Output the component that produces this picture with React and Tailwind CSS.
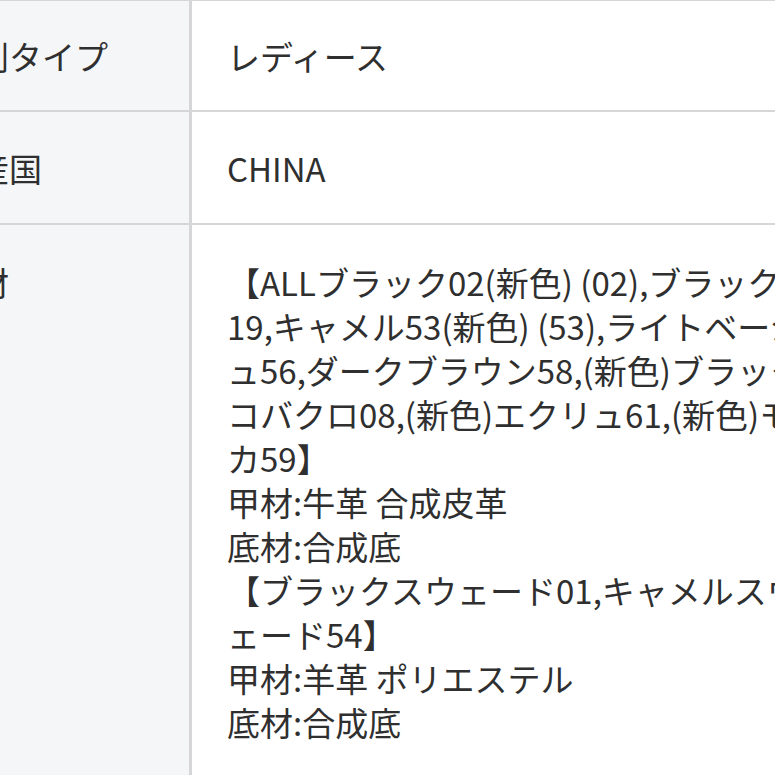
export default function App() {
  const font = { fontFamily: '"Noto Sans CJK JP", "Noto Sans", sans-serif' };
  const rows = [
    { label: '性別タイプ', value: ['レディース'], pad: 'pt-[33px] pb-[32px]' },
    { label: '生産国', value: ['CHINA'], pad: 'pt-[34px] pb-[33px]' },
    {
      label: '素材',
      pad: 'pt-[35px] pb-[32px]',
      value: [
        '【ALLブラック02(新色) (02),ブラックヌバック',
        '19,キャメル53(新色) (53),ライトベージュ',
        'ュ56,ダークブラウン58,(新色)ブラックレ',
        'コバクロ08,(新色)エクリュ61,(新色)モ',
        'カ59】',
        '甲材:牛革 合成皮革',
        '底材:合成底',
        '【ブラックスウェード01,キャメルスウ',
        'ェード54】',
        '甲材:羊革 ポリエステル',
        '底材:合成底',
      ],
    },
  ];
  return (
    <div className="w-[775px] h-[775px] overflow-hidden bg-white text-[#2f2f2f]" style={font}>
      <div className="ml-[-80px] w-[1100px] border-t border-[#d6d6d8]">
        {rows.map((r, i) => (
          <div key={i} className="flex border-b-2 border-[#d6d6d8]">
            <div className={`w-[272px] shrink-0 bg-[#f5f6f8] border-r-[3px] border-[#d6d6d8] pl-[23px] ${r.pad} text-[33px] leading-[44px] whitespace-nowrap`}>
              {r.label}
            </div>
            <div className={`flex-1 bg-white pl-[35px] ${r.pad} text-[33px] leading-[44px] whitespace-nowrap`}>
              {r.value.map((v, j) => (
                <div key={j}>{v}</div>
              ))}
              {r.value.length > 1 && <div className="h-[40px]" />}
            </div>
          </div>
        ))}
      </div>
    </div>
  );
}
